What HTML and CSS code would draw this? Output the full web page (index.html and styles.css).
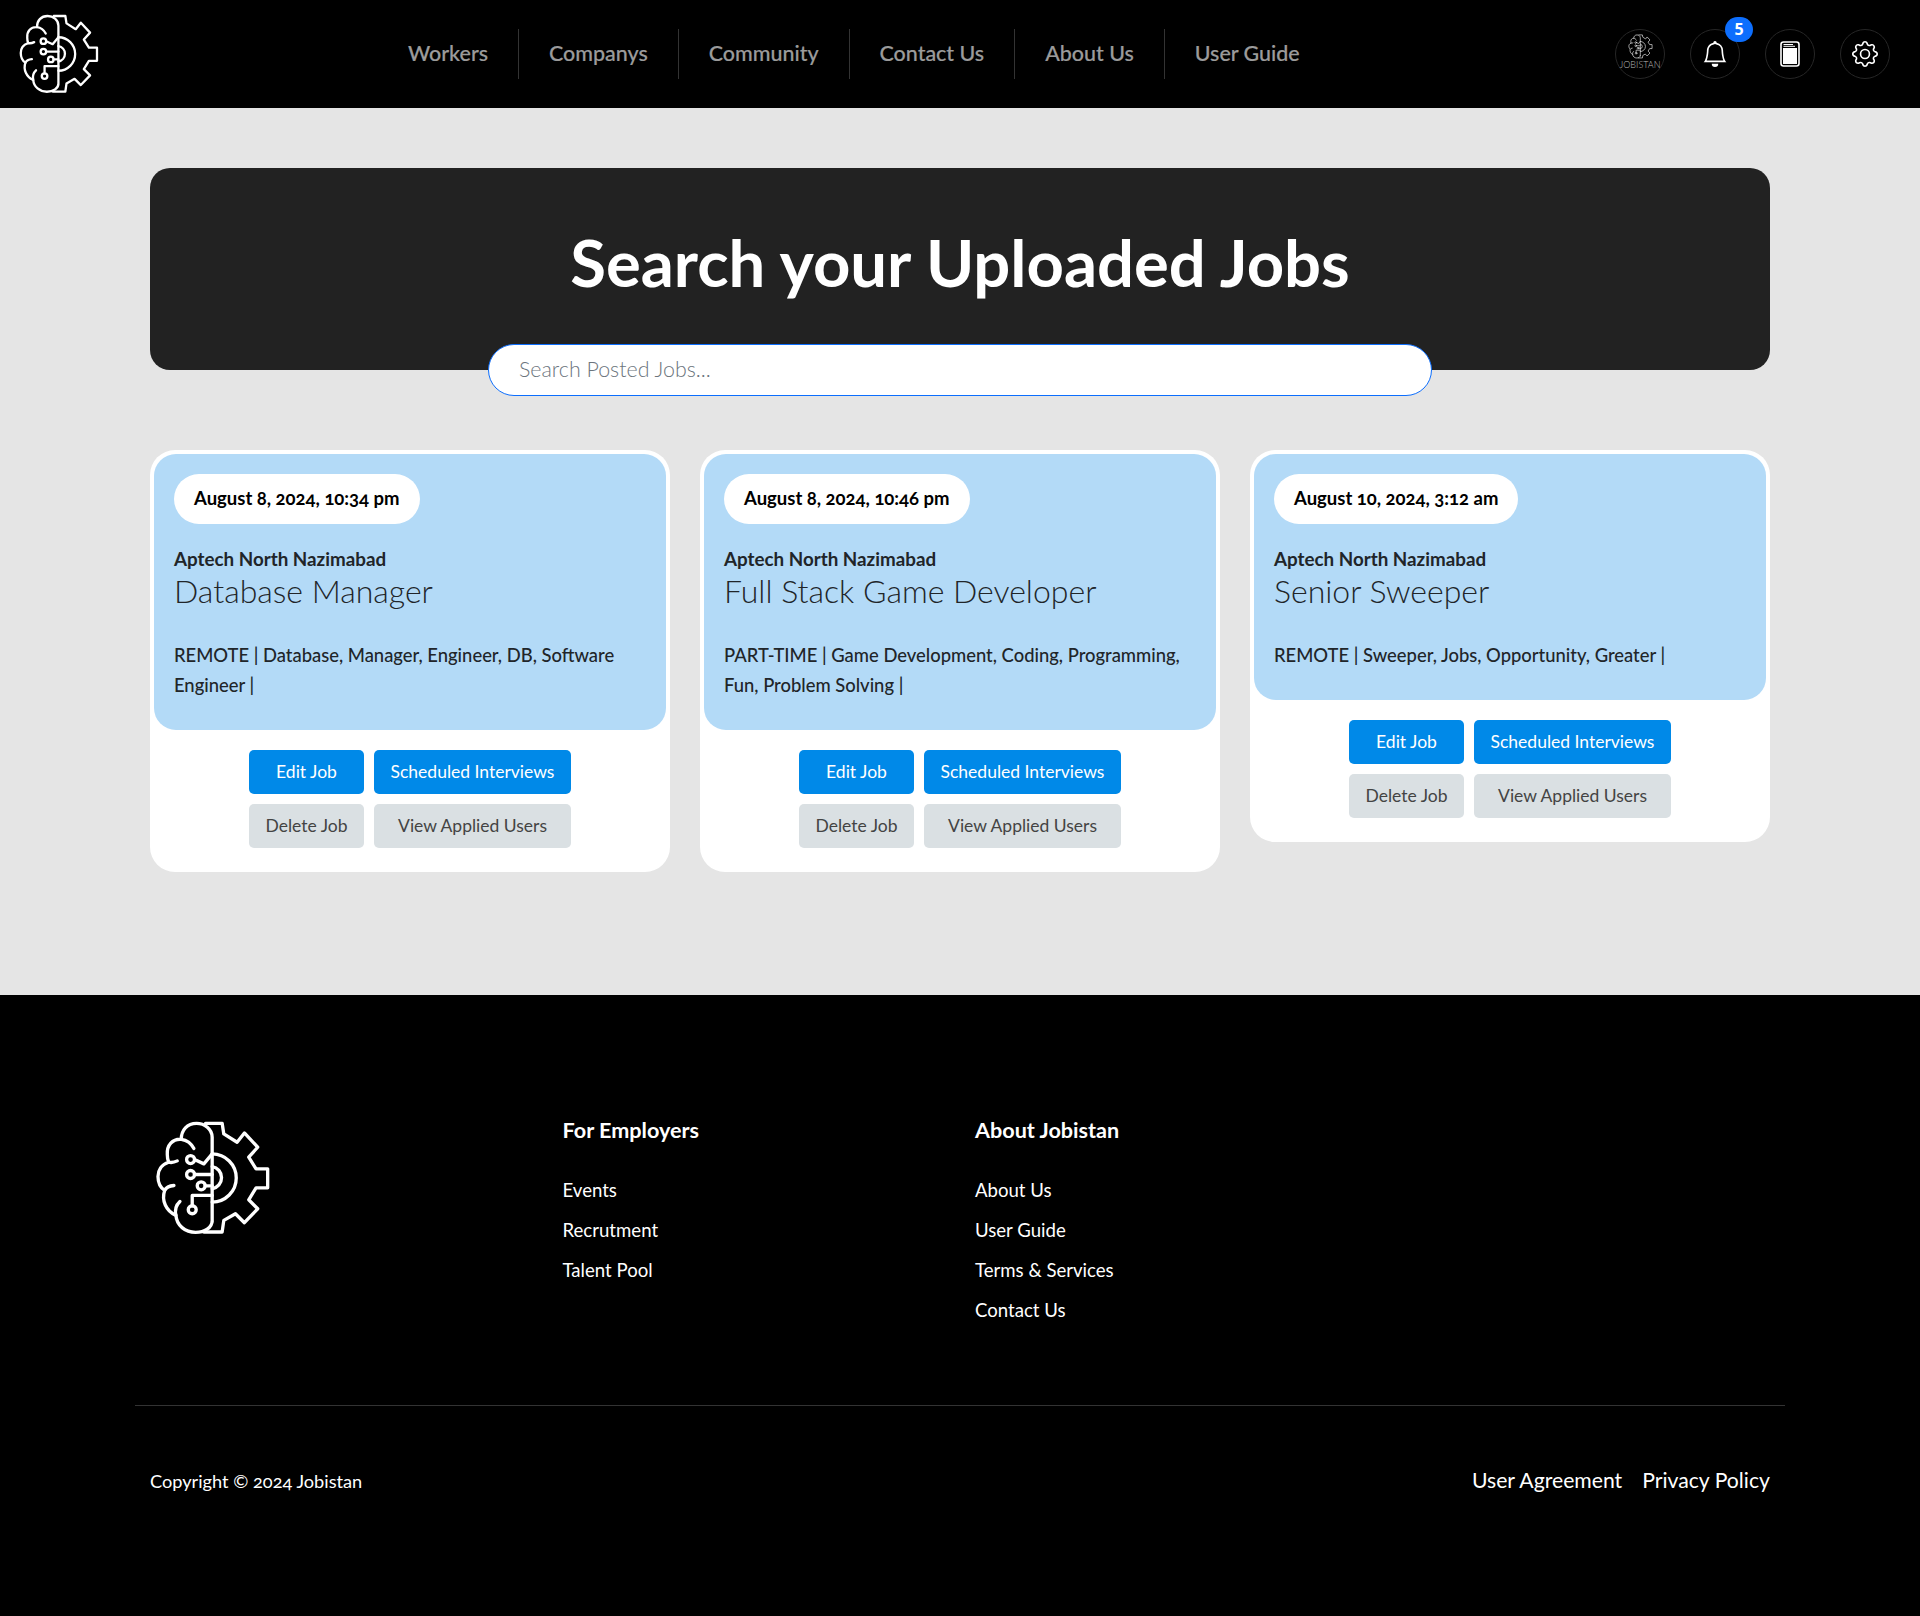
FILE: index.html
```html
<!DOCTYPE html>
<html lang="en">
<head>
    <meta charset="UTF-8">
    <meta name="viewport" content="width=device-width, initial-scale=1.0">
    <title>Jobistan - Uploaded Jobs</title>
    <link rel="stylesheet" href="styles.css">
</head>
<body>

<svg class="defs" width="0" height="0" aria-hidden="true">
    <symbol id="brain-gear" viewBox="40 55 355 355">
        <g fill="none" stroke="currentColor" stroke-width="10" stroke-linecap="round" stroke-linejoin="round">
            <path d="M215 365V110C215 85 192 68 168 68C140 68 122 88 122 116C96 114 78 134 80 162C80 170 81 178 84 185C62 192 52 210 52 228C52 246 60 262 72 270C62 300 76 332 106 345C108 375 134 396 165 396C192 396 215 382 215 360"/>
            <path d="M122 116C138 118 152 128 160 144"/>
            <path d="M84 185C92 187 102 185 110 181"/>
            <path d="M72 270C76 262 88 256 100 255"/>
            <path d="M106 345C102 328 106 314 118 303"/>
            <circle cx="150" cy="177" r="12"/>
            <path d="M162 177L190 190L215 160"/>
            <circle cx="150" cy="222" r="12"/>
            <path d="M162 222H215"/>
            <circle cx="182" cy="256" r="12"/>
            <path d="M194 256H215"/>
            <circle cx="155" cy="328" r="12"/>
            <path d="M155 316V285H215"/>
            <path d="M195 68H245L250 100L290 125L312 97L352 140L325 170L347 205H382V262H347L325 298L352 325L312 367L285 340L250 360L245 395H190"/>
            <path d="M215 160A72 72 0 0 1 215 305"/>
            <path d="M215 198A34 34 0 0 1 215 265"/>
        </g>
    </symbol>
</svg>

<header id="top-bar">
    <a class="logo" href="#"><svg class="logo-img"><use href="#brain-gear"/></svg></a>
    <nav id="main-nav">
        <a href="#">Workers</a>
        <a href="#">Companys</a>
        <a href="#">Community</a>
        <a href="#">Contact Us</a>
        <a href="#">About Us</a>
        <a href="#">User Guide</a>
    </nav>
    <div id="top-icons">
        <a class="round-btn avatar" href="#">
            <svg class="avatar-logo"><use href="#brain-gear"/></svg>
            <span class="avatar-text">JOBISTAN</span>
        </a>
        <a class="round-btn" href="#">
            <svg width="26" height="26" viewBox="0 0 16 16" fill="currentColor"><path d="M8 16a2 2 0 0 0 2-2H6a2 2 0 0 0 2 2zM8 1.918l-.797.161A4.002 4.002 0 0 0 4 6c0 .628-.134 2.197-.459 3.742-.16.767-.376 1.566-.663 2.258h10.244c-.287-.692-.502-1.49-.663-2.258C12.134 8.197 12 6.628 12 6a4.002 4.002 0 0 0-3.203-3.92L8 1.917zM14.22 12c.223.447.481.801.78 1H1c.299-.199.557-.553.78-1C2.68 10.2 3 6.88 3 6c0-2.42 1.72-4.44 4.005-4.901a1 1 0 1 1 1.99 0A5.002 5.002 0 0 1 13 6c0 .88.32 4.2 1.22 6z"/></svg>
            <span class="badge">5</span>
        </a>
        <a class="round-btn" href="#">
            <svg width="20" height="26" viewBox="0 0 20 26"><rect x="1" y="1" width="18" height="24" rx="2.5" fill="none" stroke="currentColor" stroke-width="1.6"/><rect x="3" y="7" width="14" height="16" fill="currentColor"/><path d="M3.5 3.5H13M3.5 5.3H15" stroke="currentColor" stroke-width="1"/></svg>
        </a>
        <a class="round-btn" href="#">
            <svg width="26" height="26" viewBox="0 0 16 16" fill="currentColor"><path d="M8 4.754a3.246 3.246 0 1 0 0 6.492 3.246 3.246 0 0 0 0-6.492zM5.754 8a2.246 2.246 0 1 1 4.492 0 2.246 2.246 0 0 1-4.492 0z"/><path d="M9.796 1.343c-.527-1.79-3.065-1.79-3.592 0l-.094.319a.873.873 0 0 1-1.255.52l-.292-.16c-1.64-.892-3.433.902-2.54 2.541l.159.292a.873.873 0 0 1-.52 1.255l-.319.094c-1.79.527-1.79 3.065 0 3.592l.319.094a.873.873 0 0 1 .52 1.255l-.16.292c-.892 1.64.901 3.434 2.541 2.54l.292-.159a.873.873 0 0 1 1.255.52l.094.319c.527 1.79 3.065 1.79 3.592 0l.094-.319a.873.873 0 0 1 1.255-.52l.292.16c1.64.893 3.434-.902 2.54-2.541l-.159-.292a.873.873 0 0 1 .52-1.255l.319-.094c1.79-.527 1.79-3.065 0-3.592l-.319-.094a.873.873 0 0 1-.52-1.255l.16-.292c.893-1.64-.902-3.433-2.541-2.54l-.292.159a.873.873 0 0 1-1.255-.52l-.094-.319zm-2.633.283c.246-.835 1.428-.835 1.674 0l.094.319a1.873 1.873 0 0 0 2.693 1.115l.291-.16c.764-.415 1.6.42 1.184 1.185l-.159.292a1.873 1.873 0 0 0 1.116 2.692l.318.094c.835.246.835 1.428 0 1.674l-.319.094a1.873 1.873 0 0 0-1.115 2.693l.16.291c.415.764-.42 1.6-1.185 1.184l-.291-.159a1.873 1.873 0 0 0-2.693 1.116l-.094.318c-.246.835-1.428.835-1.674 0l-.094-.319a1.873 1.873 0 0 0-2.692-1.115l-.292.16c-.764.415-1.6-.42-1.184-1.185l.159-.291A1.873 1.873 0 0 0 1.945 8.93l-.319-.094c-.835-.246-.835-1.428 0-1.674l.319-.094A1.873 1.873 0 0 0 3.06 4.377l-.16-.292c-.415-.764.42-1.6 1.185-1.184l.292.159a1.873 1.873 0 0 0 2.692-1.115l.094-.319z"/></svg>
        </a>
    </div>
</header>

<main id="main-content">
    <section id="hero">
        <h1>Search your Uploaded Jobs</h1>
    </section>
    <input type="text" id="job-search" placeholder="Search Posted Jobs...">

    <div id="job-list">
        <article class="job-card">
            <div class="job-info">
                <span class="job-date">August 8, 2024, 10:34 pm</span>
                <h4 class="job-company">Aptech North Nazimabad</h4>
                <h3 class="job-title">Database Manager</h3>
                <p class="job-tags">REMOTE | Database, Manager, Engineer, DB, Software Engineer |</p>
            </div>
            <div class="job-actions">
                <a class="btn btn-blue" href="#">Edit Job</a>
                <a class="btn btn-blue" href="#">Scheduled Interviews</a>
                <a class="btn btn-grey" href="#">Delete Job</a>
                <a class="btn btn-grey" href="#">View Applied Users</a>
            </div>
        </article>
        <article class="job-card">
            <div class="job-info">
                <span class="job-date">August 8, 2024, 10:46 pm</span>
                <h4 class="job-company">Aptech North Nazimabad</h4>
                <h3 class="job-title">Full Stack Game Developer</h3>
                <p class="job-tags">PART-TIME | Game Development, Coding, Programming, Fun, Problem Solving |</p>
            </div>
            <div class="job-actions">
                <a class="btn btn-blue" href="#">Edit Job</a>
                <a class="btn btn-blue" href="#">Scheduled Interviews</a>
                <a class="btn btn-grey" href="#">Delete Job</a>
                <a class="btn btn-grey" href="#">View Applied Users</a>
            </div>
        </article>
        <article class="job-card">
            <div class="job-info">
                <span class="job-date">August 10, 2024, 3:12 am</span>
                <h4 class="job-company">Aptech North Nazimabad</h4>
                <h3 class="job-title">Senior Sweeper</h3>
                <p class="job-tags">REMOTE | Sweeper, Jobs, Opportunity, Greater |</p>
            </div>
            <div class="job-actions">
                <a class="btn btn-blue" href="#">Edit Job</a>
                <a class="btn btn-blue" href="#">Scheduled Interviews</a>
                <a class="btn btn-grey" href="#">Delete Job</a>
                <a class="btn btn-grey" href="#">View Applied Users</a>
            </div>
        </article>
    </div>
</main>

<footer id="site-footer">
    <div class="footer-top">
        <svg class="footer-logo"><use href="#brain-gear"/></svg>
        <div class="footer-col">
            <h5>For Employers</h5>
            <a href="#">Events</a>
            <a href="#">Recrutment</a>
            <a href="#">Talent Pool</a>
        </div>
        <div class="footer-col">
            <h5>About Jobistan</h5>
            <a href="#">About Us</a>
            <a href="#">User Guide</a>
            <a href="#">Terms &amp; Services</a>
            <a href="#">Contact Us</a>
        </div>
    </div>
    <hr class="footer-line">
    <div class="footer-bottom">
        <span class="copyright">Copyright © 2024 Jobistan</span>
        <div class="legal-links">
            <a href="#">User Agreement</a>
            <a href="#">Privacy Policy</a>
        </div>
    </div>
</footer>

</body>
</html>
```

FILE: styles.css
```css
/* Body */
body {
    font-family: 'Lato', 'Liberation Sans', sans-serif;
    font-variant-numeric: oldstyle-nums;
    margin: 0;
    padding: 0;
    background-color: #000;
    color: #212529;
}

a {
    text-decoration: none;
    color: inherit;
}

.defs {
    display: block;
    position: absolute;
}

/* Header */
#top-bar {
    height: 108px;
    background-color: #000;
    display: flex;
    align-items: center;
    padding: 0 30px 0 18px;
    box-sizing: border-box;
}

.logo {
    display: block;
    width: 82px;
    height: 82px;
}

.logo-img {
    display: block;
    width: 82px;
    height: 82px;
    color: #fff;
}

#main-nav {
    display: flex;
    margin-left: 278px;
}

#main-nav a {
    height: 50px;
    line-height: 49px;
    padding: 0 30px;
    font-size: 21.45px;
    font-weight: 500;
    color: #9b9b9b;
    border-right: 1px solid #333;
    -webkit-text-stroke: 0.2px #9b9b9b;
}

#main-nav a:last-child {
    border-right: none;
}

#top-icons {
    display: flex;
    gap: 25px;
    margin-left: auto;
}

.round-btn {
    position: relative;
    width: 50px;
    height: 50px;
    box-sizing: border-box;
    border: 1px solid #262626;
    border-radius: 50%;
    display: flex;
    align-items: center;
    justify-content: center;
    color: #fff;
}

.avatar {
    flex-direction: column;
    justify-content: flex-start;
    padding-top: 4px;
}

.avatar-logo {
    width: 25px;
    height: 25px;
    color: #ddd;
}

.avatar-text {
    font-size: 9px;
    font-weight: 300;
    line-height: 11px;
    color: #bbb;
}

.badge {
    position: absolute;
    top: -13px;
    right: -14px;
    width: 28px;
    height: 25px;
    border-radius: 13px;
    background-color: #0d6efd;
    color: #fff;
    font-family: 'Open Sans', sans-serif;
    font-variant-numeric: normal;
    font-size: 16px;
    font-weight: 700;
    line-height: 25px;
    text-align: center;
}

/* Main Content Area */
#main-content {
    background-color: #e5e5e5;
    height: 887px;
    box-sizing: border-box;
    padding: 60px 150px 0;
}

#hero {
    height: 202px;
    background-color: #222;
    border-radius: 20px;
    padding-top: 55px;
    box-sizing: border-box;
}

#hero h1 {
    margin: 0;
    color: #fff;
    text-align: center;
    font-size: 65.2px;
    font-weight: 700;
    line-height: 78px;
}

#job-search {
    display: block;
    width: 944px;
    height: 52px;
    box-sizing: border-box;
    margin: -26px auto 0;
    position: relative;
    padding: 0 30px 3px;
    border: 1px solid #0d6efd;
    border-radius: 26px;
    background-color: #fff;
    font-family: inherit;
    font-size: 21.4px;
    font-weight: 300;
    outline: none;
}

#job-search::placeholder {
    color: #6c757d;
    opacity: 1;
}

/* Job Cards */
#job-list {
    display: grid;
    grid-template-columns: repeat(3, 520px);
    gap: 30px;
    align-items: start;
    margin-top: 54px;
}

.job-card {
    background-color: #fff;
    border-radius: 25px;
    padding: 4px 4px 24px;
}

.job-info {
    background-color: #b3daf7;
    border-radius: 22px;
    padding: 20px 20px 30px;
}

.job-date {
    display: inline-block;
    height: 50px;
    line-height: 49px;
    padding: 0 20px;
    border-radius: 25px;
    background-color: #fff;
    color: #000;
    font-size: 18.5px;
    font-weight: 700;
}

.job-company {
    margin: 23px 0 0;
    font-size: 18.8px;
    font-weight: 700;
    line-height: 24px;
}

.job-title {
    margin: 1px 0 0;
    font-size: 32px;
    font-weight: 300;
    line-height: 38px;
}

.job-tags {
    margin: 30px 0 0;
    font-size: 18.4px;
    font-weight: 500;
    line-height: 30px;
}

.job-actions {
    display: grid;
    grid-template-columns: 115px 197px;
    gap: 10px;
    justify-content: center;
    margin-top: 20px;
}

.btn {
    height: 44px;
    line-height: 44px;
    border-radius: 5px;
    text-align: center;
    font-size: 17.5px;
}

.btn-blue {
    background-color: #0089e8;
    color: #fff;
}

.btn-grey {
    background-color: #dae0e3;
    color: #444;
}

/* Footer */
#site-footer {
    background-color: #000;
    height: 621px;
    box-sizing: border-box;
    padding: 120px 0 0;
    color: #fff;
}

.footer-top {
    height: 290px;
    padding: 0 150px;
    display: grid;
    grid-template-columns: 412.5px 412.5px 1fr;
}

.footer-logo {
    display: block;
    width: 118px;
    height: 118px;
    margin: 4px 0 0 4px;
    color: #fff;
}

.footer-col h5 {
    margin: 0 0 25px;
    font-size: 21.6px;
    font-weight: 700;
    line-height: 30px;
}

.footer-col a {
    display: block;
    font-size: 18.6px;
    line-height: 40px;
}

.footer-line {
    width: 1650px;
    margin: 0 auto;
    border: none;
    border-top: 1px solid #333;
}

.footer-bottom {
    display: flex;
    justify-content: space-between;
    align-items: center;
    padding: 61px 150px 0;
}

.copyright {
    font-size: 18.2px;
    padding-top: 2px;
}

.legal-links {
    display: flex;
    gap: 20px;
    font-size: 21.2px;
}

/* Media Queries for Responsive Design */
@media (max-width: 600px) {
    #job-list {
        grid-template-columns: 100%;
    }
}
```
